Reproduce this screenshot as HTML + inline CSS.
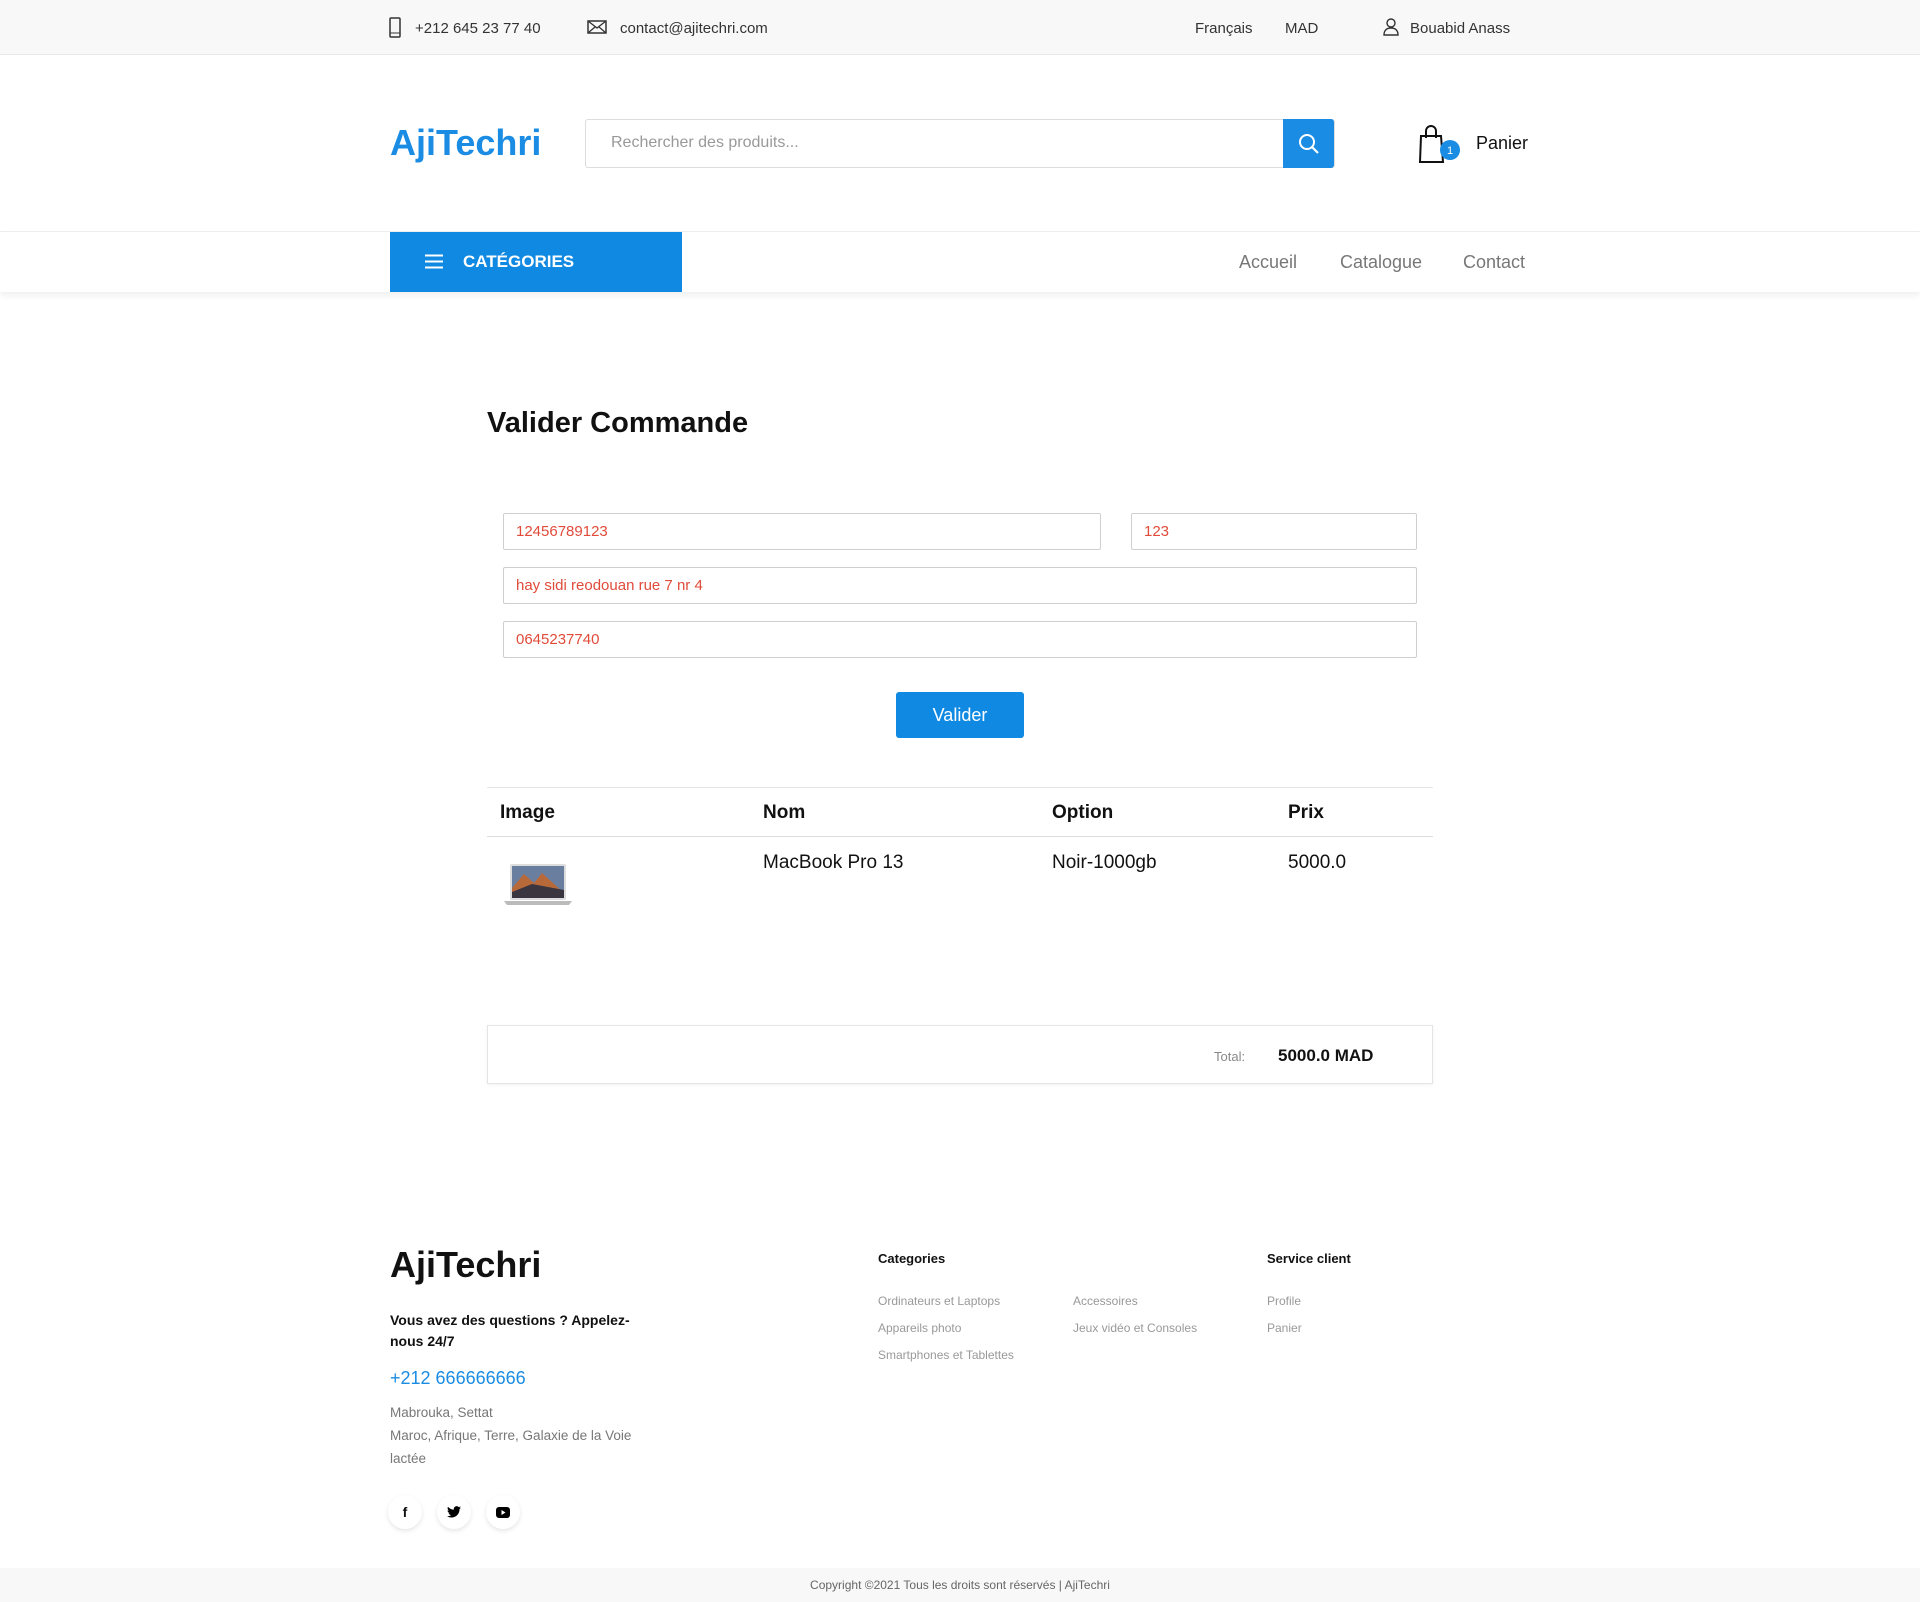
<!DOCTYPE html>
<html><head><meta charset="utf-8"><style>
*{box-sizing:border-box;margin:0;padding:0}
body{width:1920px;height:1602px;position:relative;background:#fff;font-family:"Liberation Sans",sans-serif;color:#111;overflow:hidden}
.a{position:absolute;white-space:nowrap}
.top{position:absolute;left:0;top:0;width:1920px;height:55px;background:#f8f8f8;border-bottom:1px solid #e8e8e8}
.t{font-size:15px;color:#333;top:20px}
.inp{position:absolute;border:1px solid #cfcfcf;border-radius:2px;height:37px;color:#e04b3a;font-size:15px;padding:9px 12px}
.nav{position:absolute;left:0;top:231px;width:1920px;height:61px;background:#fff;border-top:1px solid #eee;box-shadow:0 4px 6px rgba(0,0,0,.06)}
.nl{font-size:18px;color:#777;top:252px}
.th{font-size:19px;font-weight:bold;top:802px}
.td{font-size:19px;top:852px}
.fl{font-size:12px;color:#999}
.soc{position:absolute;top:1495px;width:34px;height:34px;border-radius:50%;background:#fff;box-shadow:0 2px 5px rgba(0,0,0,.1);display:flex;align-items:center;justify-content:center;font-size:14px;font-weight:bold}
</style></head><body>
<div class="top"></div>
<svg class="a" style="left:389px;top:17px" width="12" height="21" viewBox="0 0 12 21"><rect x="1" y="1" width="10" height="19" rx="1" fill="none" stroke="#333" stroke-width="1.5"/><line x1="1" y1="16" x2="11" y2="16" stroke="#333"/></svg>
<div class="a t" style="left:415px">+212 645 23 77 40</div>
<svg class="a" style="left:587px;top:20px" width="20" height="14" viewBox="0 0 20 14"><rect x="1" y="1" width="18" height="12" fill="none" stroke="#333" stroke-width="1.5"/><path d="M1 1l9 7 9-7M1 13l7-6M19 13l-7-6" fill="none" stroke="#333" stroke-width="1.3"/></svg>
<div class="a t" style="left:620px">contact@ajitechri.com</div>
<div class="a t" style="left:1195px">Français</div>
<div class="a t" style="left:1285px">MAD</div>
<svg class="a" style="left:1383px;top:18px" width="16" height="18" viewBox="0 0 16 18"><circle cx="8" cy="5" r="4" fill="none" stroke="#333" stroke-width="1.4"/><path d="M1 17c0-5 3-7 7-7s7 2 7 7z" fill="none" stroke="#333" stroke-width="1.4"/></svg>
<div class="a t" style="left:1410px">Bouabid Anass</div>

<div class="a" style="left:390px;top:122px;font-size:36px;font-weight:bold;color:#1a8ce3">AjiTechri</div>
<div class="a" style="left:585px;top:119px;width:750px;height:49px;border:1px solid #ddd;border-radius:3px"></div>
<div class="a" style="left:611px;top:134px;font-size:16px;color:#999">Rechercher des produits...</div>
<div class="a" style="left:1283px;top:119px;width:51px;height:49px;background:#1a8ce3;border-radius:0 3px 3px 0"></div>
<svg class="a" style="left:1298px;top:133px" width="22" height="22" viewBox="0 0 22 22"><circle cx="9" cy="9" r="7" fill="none" stroke="#fff" stroke-width="2"/><line x1="14" y1="14" x2="20" y2="20" stroke="#fff" stroke-width="2.2"/></svg>
<svg class="a" style="left:1418px;top:124px" width="42" height="40" viewBox="0 0 42 40"><path d="M3 12h20l2 26H2z" fill="none" stroke="#111" stroke-width="2"/><path d="M8 14V7a5 5 0 0 1 10 0v7" fill="none" stroke="#111" stroke-width="2"/><circle cx="32" cy="26" r="10" fill="#1a8ce3"/><text x="32" y="30" font-size="11" fill="#fff" text-anchor="middle" font-family="Liberation Sans">1</text></svg>
<div class="a" style="left:1476px;top:133px;font-size:18px">Panier</div>

<div class="nav"></div>
<div class="a" style="left:390px;top:232px;width:292px;height:60px;background:#1089e2"></div>
<svg class="a" style="left:425px;top:254px" width="18" height="15"><path d="M0 1.5h18M0 7.5h18M0 13.5h18" stroke="#fff" stroke-width="2"/></svg>
<div class="a" style="left:463px;top:252px;font-size:17px;font-weight:bold;color:#fff">CATÉGORIES</div>
<div class="a nl" style="left:1239px">Accueil</div>
<div class="a nl" style="left:1340px">Catalogue</div>
<div class="a nl" style="left:1463px">Contact</div>

<div class="a" style="left:487px;top:407px;font-size:29px;font-weight:bold">Valider Commande</div>
<div class="inp" style="left:503px;top:513px;width:598px">12456789123</div>
<div class="inp" style="left:1131px;top:513px;width:286px">123</div>
<div class="inp" style="left:503px;top:567px;width:914px">hay sidi reodouan rue 7 nr 4</div>
<div class="inp" style="left:503px;top:621px;width:914px">0645237740</div>
<div class="a" style="left:896px;top:692px;width:128px;height:46px;background:#1089e2;border-radius:3px;color:#fff;font-size:18px;text-align:center;line-height:46px">Valider</div>

<div class="a" style="left:487px;top:787px;width:946px;border-top:1px solid #e5e5e5"></div>
<div class="a" style="left:487px;top:836px;width:946px;border-top:1px solid #ddd"></div>
<div class="a th" style="left:500px">Image</div>
<div class="a th" style="left:763px">Nom</div>
<div class="a th" style="left:1052px">Option</div>
<div class="a th" style="left:1288px">Prix</div>
<svg class="a" style="left:503px;top:862px" width="70" height="46" viewBox="0 0 70 46"><rect x="7" y="2" width="56" height="36" rx="2" fill="#ddd"/><rect x="9" y="4" width="52" height="32" fill="#6a7fa0"/><path d="M9 26l12-14 10 9 8-10 22 20v5H9z" fill="#b8693a"/><path d="M9 30l20-8 32 6v8H9z" fill="#3b3540"/><path d="M1 39h68l-3 4H4z" fill="#bbb"/></svg>
<div class="a td" style="left:763px">MacBook Pro 13</div>
<div class="a td" style="left:1052px">Noir-1000gb</div>
<div class="a td" style="left:1288px">5000.0</div>

<div class="a" style="left:487px;top:1025px;width:946px;height:59px;border:1px solid #e5e5e5;box-shadow:0 1px 3px rgba(0,0,0,.06)"></div>
<div class="a" style="left:1214px;top:1049px;font-size:13px;color:#888">Total:</div>
<div class="a" style="left:1278px;top:1046px;font-size:17px;font-weight:bold">5000.0 MAD</div>

<div class="a" style="left:390px;top:1244px;font-size:36px;font-weight:bold">AjiTechri</div>
<div class="a" style="left:390px;top:1310px;font-size:14px;font-weight:bold;line-height:21px">Vous avez des questions ? Appelez-<br>nous 24/7</div>
<div class="a" style="left:390px;top:1368px;font-size:18px;color:#1a8ce3">+212 666666666</div>
<div class="a" style="left:390px;top:1401px;font-size:13.5px;color:#777;line-height:23px">Mabrouka, Settat<br>Maroc, Afrique, Terre, Galaxie de la Voie<br>lactée</div>
<div class="soc" style="left:388px">f</div>
<div class="soc" style="left:437px"><svg width="14" height="12" viewBox="0 0 24 20"><path d="M24 2.4a10 10 0 0 1-2.8.8A5 5 0 0 0 23.3.4a10 10 0 0 1-3.1 1.2A4.9 4.9 0 0 0 11.8 6 14 14 0 0 1 1.7.9a4.9 4.9 0 0 0 1.5 6.6A4.9 4.9 0 0 1 1 6.9a4.9 4.9 0 0 0 3.9 4.8 4.9 4.9 0 0 1-2.2.1 4.9 4.9 0 0 0 4.6 3.4A9.9 9.9 0 0 1 0 17.2 14 14 0 0 0 7.5 19.4c9.1 0 14-7.5 14-14v-.6A10 10 0 0 0 24 2.4z"/></svg></div>
<div class="soc" style="left:486px"><svg width="14" height="11" viewBox="0 0 14 11"><rect width="14" height="11" rx="3"/><path d="M5.5 3v5l4-2.5z" fill="#fff"/></svg></div>
<div class="a" style="left:878px;top:1251px;font-size:13px;font-weight:bold">Categories</div>
<div class="a" style="left:1267px;top:1251px;font-size:13px;font-weight:bold">Service client</div>
<div class="a fl" style="left:878px;top:1294px">Ordinateurs et Laptops</div>
<div class="a fl" style="left:878px;top:1321px">Appareils photo</div>
<div class="a fl" style="left:878px;top:1348px">Smartphones et Tablettes</div>
<div class="a fl" style="left:1073px;top:1294px">Accessoires</div>
<div class="a fl" style="left:1073px;top:1321px">Jeux vidéo et Consoles</div>
<div class="a fl" style="left:1267px;top:1294px">Profile</div>
<div class="a fl" style="left:1267px;top:1321px">Panier</div>
<div class="a" style="left:0;top:1568px;width:1920px;height:34px;background:#f8f8f8"></div>
<div class="a" style="left:0;top:1578px;width:1920px;text-align:center;font-size:12px;color:#666">Copyright ©2021 Tous les droits sont réservés | AjiTechri</div>
</body></html>
